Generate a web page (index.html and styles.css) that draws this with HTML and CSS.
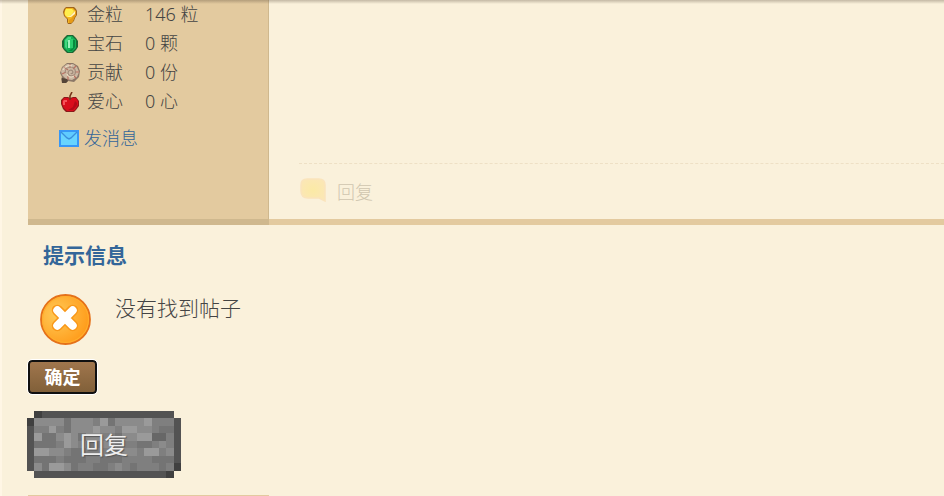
FILE: index.html
```
<!DOCTYPE html>
<html lang="zh-CN">
<head>
<meta charset="utf-8">
<title>提示信息</title>
<link rel="stylesheet" href="styles.css">
</head>
<body>
<main class="page">
  <article class="post">
    <aside class="author">
      <dl class="stats">
        <div class="stat">
          <dt><svg class="icon" viewBox="0 0 20 20" aria-hidden="true"><path d="M6 2h8l2 2 1 2v4l-2 3-1 3-3 3H8l-1-2v-3l-3-3-1-4 1-3z" fill="#a0661c"/><path d="M6 3h7l3 3v4l-2 3-1 3-2 2H8v-4l-3-3-1-3 1-3z" fill="#f3b51f"/><path d="M6 4h6l2 2-2 3-3 3H7l-2-2V6z" fill="#ffee4d"/><path d="M14 9l2-2v3l-2 3-1 3-2 2H9v-3l3-2z" fill="#e79a16"/><path d="M7 12l3-1 5-5v3l-4 3z" fill="#fff3bd"/></svg>金粒</dt>
          <dd>146 粒</dd>
        </div>
        <div class="stat">
          <dt><svg class="icon" viewBox="0 0 20 20" aria-hidden="true"><path d="M7 1h6l3 3 2 3v6l-2 3-3 3H7l-3-3-2-3V7l2-3z" fill="#1d6634"/><path d="M8 2h4l4 4v8l-4 4H8l-4-4V6z" fill="#13b155"/><path d="M8 3h3v3L7 8v7l-2-2V6z" fill="#45d580"/><path d="M8 5h5v9H8z" fill="#2bcd6c"/><path d="M8 6h2v8H8z" fill="#9cf3bd"/><path d="M13 6h2v7l-3 4H8l5-3z" fill="#078a3d"/></svg>宝石</dt>
          <dd>0 颗</dd>
        </div>
        <div class="stat">
          <dt><svg class="icon icon-shell" viewBox="0 0 22 22" aria-hidden="true"><path d="M8 1h6l5 3 2 5-1 6-5 5-6-1-2 2H3l-1-4 1-2-2-4 2-6z" fill="#8b7767"/><path d="M8 2h6l4 3 2 5-2 5-5 3-6-1-4-4-1-4 2-4z" fill="#cdb9a3"/><path d="M5 5l4 3M11 2v4M17 4l-3 3M20 10h-4M17 16l-3-3M9 18v-4M3 12l4-2" stroke="#bc7060" stroke-width="1.2"/><path d="M6 11c0-4 3-6 6-6 4 0 5 4 4 7-2 3-7 2-7-1 0-3 4-4 5-1 0 2-2 2-2 1" fill="none" stroke="#a18b7b" stroke-width="1.2"/><path d="M4 8c2-4 6-5 9-4M8 12c1 3 4 4 7 2" fill="none" stroke="#f2e5cc"/><path d="M3 16l5 1 1 2-2 2H3z" fill="#554538"/></svg>贡献</dt>
          <dd>0 份</dd>
        </div>
        <div class="stat">
          <dt><svg class="icon" viewBox="0 0 20 20" aria-hidden="true"><path d="M4 5h4l2 1 3-1h3l3 4v5l-3 4-2 2H6l-3-3-2-5V8z" fill="#8a1a1a"/><path d="M4 6h4l2 1 3-1h3l2 3v4l-3 5-2 1H7l-3-3-2-4V9z" fill="#d90d1c"/><path d="M4 8h3v2H5v3H3V9z" fill="#f6525a"/><path d="M15 9l2 2v2l-4 5H8l5-3z" fill="#b30a17"/><path d="M10 8V4l2-4" fill="none" stroke="#77341b" stroke-width="1.6"/></svg>爱心</dt>
          <dd>0 心</dd>
        </div>
      </dl>
      <a class="message-link" href="#message"><svg class="mail" viewBox="0 0 20 17" aria-hidden="true"><path fill="#3797f6" d="M0 0h20v17H0z"/><path fill="#68d4ff" d="M2 2h16v13H2z"/><path d="M2 2h16l-6 6-2 1-2-1z" fill="#5fcbff"/><path d="M2 2l6 6 2 1 2-1 6-6" fill="none" stroke="#3a8fdc" stroke-width="1.4"/></svg>发消息</a>
    </aside>
    <div class="content">
      <footer class="actions">
        <a class="reply-link" href="#reply"><svg class="bubble" viewBox="0 0 26 24" aria-hidden="true"><defs><radialGradient id="bubble-fill"><stop stop-color="#fbeaa5"/><stop offset="1" stop-color="#fbe7b4"/></radialGradient></defs><path d="M7 1h12q6 0 6 6v16l-6-3H8q-7 0-7-7V7q0-6 6-6z" fill="url(#bubble-fill)" stroke="#fae4bc" stroke-width="1.5"/></svg>回复</a>
      </footer>
    </div>
  </article>
  <section class="notice">
    <h1 class="notice-title">提示信息</h1>
    <div class="notice-body">
      <svg class="error" viewBox="0 0 50 50" aria-hidden="true"><defs><radialGradient id="error-fill" cx=".32" cy=".4" r=".75"><stop stop-color="#ffca57"/><stop offset="1" stop-color="#ff9714"/></radialGradient></defs><circle cx="25" cy="25" r="24" fill="url(#error-fill)" stroke="#e57119" stroke-width="1.8"/><circle cx="25" cy="25" r="22.5" fill="none" stroke="#ffae2d"/><path d="M17 16l15 15M32 16l-15 15" stroke="#f99819" stroke-width="11" stroke-linecap="round"/><path d="M17 16l15 15M32 16l-15 15" stroke="#fff" stroke-width="8" stroke-linecap="round"/></svg>
      <p class="notice-text">没有找到帖子</p>
    </div>
    <button class="confirm" type="button">确定</button>
  </section>
  <button class="stone" type="button">
    <svg class="stone-face" viewBox="0 0 21 9" preserveAspectRatio="none" shape-rendering="crispEdges" aria-hidden="true">
      <path fill="#535353" d="M1 0h19v1h1v7h-1v1H1V8H0V1h1z"/>
      <path fill="#404040" d="M1 0h1v1H1zM0 1h1v1H0zM19 7h2v1h-1v1h-1z"/>
      <path fill="#7f7f7f" d="M1 1h19v7H1z"/>
      <path fill="#8b8b8b" d="M1 1h4v1H1zM6 1h3v1H6zM12 1h4v1h-4zM6 2h3v1H6zM10 2h2v1h-2zM15 2h2v1h-2zM4 3h1v1H4zM6 3h1v1H6zM8 3h2v1H8zM13 3h2v1h-2zM6 4h1v1H6zM10 4h2v1h-2zM18 4h1v1h-1zM3 5h2v1H3zM13 5h2v1h-2zM19 5h1v1h-1zM1 7h1v1H1zM5 7h1v1H5zM12 7h1v1h-1z"/>
      <path fill="#747474" d="M5 1h1v1H5zM11 1h1v1h-1zM5 2h1v1H5zM18 2h2v1h-2zM2 3h2v1H2zM7 3h1v1H7zM12 3h1v1h-1zM1 4h3v1H1zM8 4h2v1H8zM15 4h2v1h-2zM6 5h2v1H6zM12 5h1v1h-1zM1 6h3v1H1zM5 6h3v1H5zM10 6h3v1h-3zM17 6h3v1h-3zM2 7h1v1H2zM6 7h1v1H6zM9 7h2v1H9zM14 7h1v1h-1zM18 7h1v1h-1z"/>
      <path fill="#9a9a9a" d="M10 1h1v1h-1zM16 1h1v1h-1zM3 2h1v1H3zM9 2h1v1H9zM13 2h2v1h-2zM1 3h1v1H1zM5 3h1v2H5zM15 3h2v1h-2zM1 5h2v1H1zM16 5h2v1h-2zM3 7h2v1H3z"/>
      <path fill="#676767" d="M17 3h2v1h-2z"/>
    </svg>
    <span class="stone-label">回复</span>
  </button>
  <div class="next-author"></div>
</main>
</body>
</html>
```
FILE: styles.css
```
* {
  box-sizing: border-box;
}

body {
  margin: 0;
  background: #faf1db;
  color: #444;
  font: 300 18px/29px "Noto Sans", "Noto Sans CJK SC", sans-serif;
}

body::before {
  content: "";
  position: absolute;
  top: 0;
  left: 0;
  right: 0;
  height: 4px;
  background: linear-gradient(rgba(70, 55, 40, 0.3), transparent);
}

.page {
  border-left: 2px solid #fff6e5;
  padding-left: 26px;
}

a {
  text-decoration: none;
}

.post {
  display: grid;
  grid-template-columns: 241px 1fr;
}

.author {
  min-height: 225px;
  padding-left: 31px;
  background: #e3ca9f;
  border-right: 1px solid #cfb88e;
  border-bottom: 6px solid #cfb88e;
}

.stats {
  margin: 0 0 8px;
}

.stat {
  display: flex;
}

.stat dt {
  display: flex;
  align-items: center;
  gap: 6px;
  width: 86px;
}

.stat dd {
  margin: 0;
}

.icon {
  width: 22px;
  height: 20px;
}

.icon-shell {
  height: 22px;
}

.message-link {
  display: flex;
  align-items: center;
  gap: 5px;
  color: #369;
}

.mail {
  width: 20px;
  height: 17px;
}

.content {
  display: flex;
  flex-direction: column;
  justify-content: flex-end;
  padding-left: 30px;
  border-bottom: 6px solid #e3ca9f;
}

.actions {
  padding: 14px 0 12px;
  border-top: 1px dashed #eee0c5;
}

.reply-link {
  display: flex;
  align-items: flex-start;
  gap: 11px;
  padding-left: 1px;
  color: #d0c6b0;
}

.bubble {
  width: 26px;
  height: 24px;
}

.notice {
  padding-top: 15px;
}

.notice-title {
  margin: 0 15px 24px;
  color: #369;
  font-size: 21px;
  line-height: 30px;
}

.notice-body {
  display: flex;
  gap: 24px;
  padding-left: 12px;
  margin-bottom: 15px;
}

.error {
  width: 51px;
  height: 51px;
}

.notice-text {
  margin: 0;
  font-size: 21px;
  line-height: 28px;
}

.confirm {
  display: block;
  min-width: 69px;
  height: 34px;
  padding: 0 14px;
  border: 2px solid #101010;
  border-radius: 4px;
  outline: 1px solid #fff;
  background: linear-gradient(#a0764d, #816039);
  color: #fff;
  font: bold 18px/28px "Noto Sans", "Noto Sans CJK SC", sans-serif;
}

.stone {
  display: grid;
  width: 154px;
  margin: 17px 0 17px -1px;
  padding: 0;
  border: 0;
  background: none;
  color: #eee;
  font: 24px/36px "Noto Sans", "Noto Sans CJK SC", sans-serif;
}

.stone-face,
.stone-label {
  grid-area: 1 / 1;
  place-self: center;
}

.stone-face {
  width: 100%;
  height: 67px;
}

.stone-label {
  text-shadow: 1px 1px 1px #555;
}

.next-author {
  width: 241px;
  border-top: 1px solid #e3ca9f;
}
```
